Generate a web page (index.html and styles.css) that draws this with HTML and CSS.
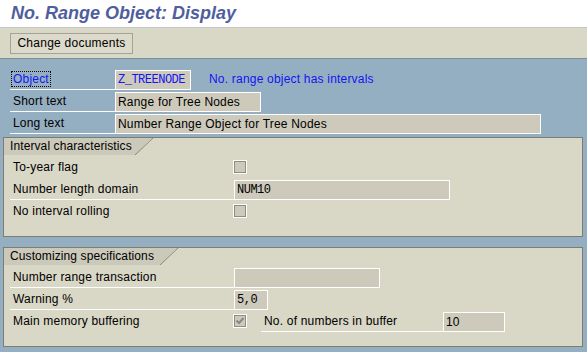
FILE: index.html
```html
<!DOCTYPE html>
<html>
<head>
<meta charset="utf-8">
<link rel="stylesheet" href="styles.css">
</head>
<body>
<div class="titlebar"><h1 class="title">No. Range Object: Display</h1></div>
<div class="toolbar"><button class="btn">Change documents</button></div>
<div class="main">
  <div class="head">
    <div class="row">
      <div class="lbl wide"><span class="focus">Object</span></div>
      <div class="field mono blue w76">Z_TREENODE</div>
      <div class="info">No. range object has intervals</div>
    </div>
    <div class="row">
      <div class="lbl wide">Short text</div>
      <div class="field w146">Range for Tree Nodes</div>
    </div>
    <div class="row">
      <div class="lbl wide">Long text</div>
      <div class="field w426">Number Range Object for Tree Nodes</div>
    </div>
  </div>

  <section class="group">
    <div class="tab t1">Interval characteristics</div>
    <div class="rows">
      <div class="row">
        <div class="lbl long noline">To-year flag</div>
        <div class="chk"></div>
      </div>
      <div class="row">
        <div class="lbl long">Number length domain</div>
        <div class="field mono w216">NUM10</div>
      </div>
      <div class="row">
        <div class="lbl long noline">No interval rolling</div>
        <div class="chk"></div>
      </div>
    </div>
  </section>

  <section class="group g2">
    <div class="tab t2">Customizing specifications</div>
    <div class="rows">
      <div class="row">
        <div class="lbl long">Number range transaction</div>
        <div class="field w146"></div>
      </div>
      <div class="row">
        <div class="lbl long">Warning %</div>
        <div class="field mono w34">5,0</div>
      </div>
      <div class="row">
        <div class="lbl long noline">Main memory buffering</div>
        <div class="chk on"><svg width="10" height="10" viewBox="0 0 10 10"><path d="M1.5 4.5 L4 7 L8.5 2" fill="none" stroke="#8a897f" stroke-width="2"/></svg></div>
        <div class="lbl sub">No. of numbers in buffer</div>
        <div class="field w62">10</div>
      </div>
    </div>
  </section>
</div>
</body>
</html>
```
FILE: styles.css
```css
* { box-sizing: border-box; }
html, body {
  margin: 0;
  padding: 0;
}
body {
  width: 587px;
  height: 352px;
  overflow: hidden;
  background: #94afc1;
  font-family: "Liberation Sans", Arial, sans-serif;
  font-size: 12px;
  letter-spacing: 0.2px;
  color: #000;
}
.titlebar {
  height: 28px;
  background: #fff;
  border-bottom: 1px solid #c6c6c6;
  padding-left: 11px;
}
.title {
  margin: 0;
  font-size: 18px;
  line-height: 26px;
  font-weight: bold;
  font-style: italic;
  letter-spacing: 0;
  color: #4f5e9d;
}
.toolbar {
  height: 31px;
  background: #d9d7c6;
  border-bottom: 1px solid #7d8e98;
  padding: 5px 10px 0;
}
.btn {
  display: block;
  width: 123px;
  height: 21px;
  margin: 0;
  padding: 0;
  border: 1px solid #a5a395;
  background: #dcdaca;
  font-family: "Liberation Sans", Arial, sans-serif;
  font-size: 12px;
  letter-spacing: 0.25px;
  color: #000;
  line-height: 19px;
  text-align: center;
}
.main {
  padding: 11px 4px 0 3px;
}
.head {
  padding-left: 7px;
}
.row {
  display: flex;
  align-items: flex-start;
  height: 20px;
  margin-bottom: 2px;
}
.lbl {
  height: 20px;
  line-height: 19px;
  padding-left: 3px;
  border-bottom: 1px solid #fff;
  white-space: nowrap;
}
.lbl.noline { border-bottom-color: transparent; }
.lbl.wide { width: 105px; }
.lbl.long { width: 224px; margin-left: 6px; }
.lbl.sub { width: 182px; margin-left: 14px; }
.focus {
  display: inline-block;
  margin-left: -2px;
  margin-top: 1px;
  padding: 0 1px;
  line-height: 14px;
  border: 1px dotted #000;
  color: #1515f2;
}
.field {
  height: 20px;
  border: 1px solid #fff;
  background: #cdcabb;
  padding: 0 2px;
  line-height: 18px;
  white-space: nowrap;
  overflow: hidden;
}
.mono {
  font-family: "Liberation Mono", "Courier New", monospace;
  font-size: 12px;
  letter-spacing: -0.5px;
}
.blue { color: #1515f2; }
.info {
  margin-left: 18px;
  line-height: 19px;
  color: #1515f2;
}
.w76 { width: 76px; }
.w146 { width: 146px; }
.w426 { width: 426px; }
.w216 { width: 216px; }
.w34 { width: 34px; }
.w62 { width: 62px; }
.group {
  margin-top: 3px;
  width: 580px;
  height: 100px;
  border: 1px solid #7f7d72;
  background: #d9d7c6;
}
.group.g2 {
  margin-top: 10px;
}
.tab {
  position: relative;
  height: 17px;
  line-height: 16px;
  padding-left: 6px;
  background: #cbc9b9;
  white-space: nowrap;
  letter-spacing: 0.1px;
}
.tab::after {
  content: "";
  position: absolute;
  top: 0;
  right: -18px;
  width: 18px;
  height: 17px;
  background: linear-gradient(to bottom right, #cbc9b9 calc(50% - 0.6px), #8b897d 50%, transparent calc(50% + 0.8px));
}
.t1 { width: 131px; }
.t2 { width: 156px; }
.rows {
  padding-top: 3px;
}
.chk {
  width: 14px;
  height: 14px;
  margin-top: 2px;
  margin-left: -1px;
  border: 1px solid #fff;
  background: #cdcabb;
  box-shadow: inset 0 0 0 1px #8f8d82;
  display: flex;
  align-items: center;
  justify-content: center;
}
```
